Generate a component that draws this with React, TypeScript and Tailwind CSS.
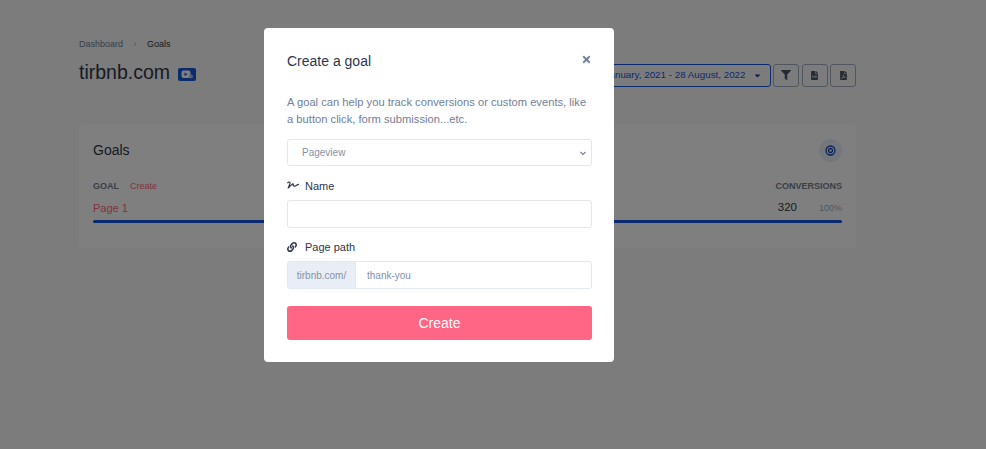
import { FaCaretDown, FaFileCsv, FaFilePdf, FaFilter, FaLink, FaSignature, FaTimes } from "react-icons/fa"

const EXPORT_BUTTONS = [FaFilter, FaFileCsv, FaFilePdf]

function Dashboard() {
  return (
    <main className="h-[449px] overflow-hidden bg-[#f8f8f8] pl-[79px] pr-[130px] pt-[38px] font-['Liberation_Sans',sans-serif] text-[#2d3748]">
      <nav className="flex h-[12px] items-center text-[9px] leading-none">
        <span className="text-[#718096]">Dashboard</span>
        <span className="ml-[10.5px] text-[9px] text-[#a0aec0]">›</span>
        <span className="ml-[10.5px] text-[#2d3748]">Goals</span>
      </nav>

      <div className="mt-[10px] flex h-[26px] items-center">
        <h1 className="text-[19.5px] leading-none text-[#2d3748]">tirbnb.com</h1>
        <span className="ml-[8px] mt-[3px] flex h-[13px] w-[18px] items-center justify-center rounded-[2px] bg-[#1657d8]">
          <svg width="13" height="9" viewBox="0 0 13 9">
            <rect x="0.5" y="0.5" width="9" height="7.5" rx="2" fill="#fff" />
            <path d="M3.5 2.4 6.5 4.2 3.5 6Z" fill="#1657d8" />
            <circle cx="10" cy="6.5" r="2" fill="#a9c5f0" />
          </svg>
        </span>
        <div className="ml-auto mt-[4px] flex items-center gap-[2.5px]">
          <button className="flex h-[23px] w-[200px] items-center justify-end gap-[7px] rounded-[3px] border border-[#1454e0] pr-[8px] text-[9.8px] text-[#1454e0]">
            <span className="whitespace-nowrap">1 January, 2021 - 28 August, 2022</span>
            <FaCaretDown className="size-[9px] text-[#0f3fa8]" />
          </button>
          {EXPORT_BUTTONS.map((Icon, i) => (
            <button
              key={i}
              className="flex h-[23px] w-[26px] items-center justify-center rounded-[3px] border border-[#a0aec0] text-[#4a5568]"
            >
              <Icon className={i === 0 ? "size-[10px]" : "size-[9px]"} />
            </button>
          ))}
        </div>
      </div>

      <section className="mt-[39px] h-[123px] rounded-[4px] bg-white px-[14px] pt-[14px]">
        <div className="flex h-[23px] items-center justify-between">
          <h2 className="text-[14px] text-[#2d3748]">Goals</h2>
          <span className="flex size-[23px] items-center justify-center rounded-full bg-[#e9eef6]">
            <svg width="11" height="11" viewBox="0 0 11 11" fill="none" stroke="#1444b8">
              <circle cx="5.5" cy="5.5" r="4.5" strokeWidth="1.3" />
              <circle cx="5.5" cy="5.5" r="2" strokeWidth="1.3" />
            </svg>
          </span>
        </div>
        <div className="mt-[19px] flex h-[12px] items-center justify-between text-[9px]">
          <div className="flex items-center">
            <span className="font-bold text-[#718096]">GOAL</span>
            <span className="ml-[11px] text-[#ff6584]">Create</span>
          </div>
          <span className="font-bold text-[#718096]">CONVERSIONS</span>
        </div>
        <div className="mt-[8px] flex h-[14px] items-center justify-between">
          <span className="text-[11px] text-[#ff6584]">Page 1</span>
          <div className="flex items-center">
            <span className="text-[11.5px] text-[#2d3748]">320</span>
            <span className="ml-[22px] mt-[2px] text-[9px] text-[#a0aec0]">100%</span>
          </div>
        </div>
        <div className="mt-[5px] h-[3px] rounded-full bg-[#1454e0]" />
      </section>
    </main>
  )
}

function GoalModal() {
  return (
    <div className="fixed inset-0 bg-black/50 font-['Liberation_Sans',sans-serif]">
      <div className="ml-[264px] mt-[28px] h-[334px] w-[350px] rounded-[4px] bg-white pl-[23px] pr-[22px] pt-[23px]">
        <div className="flex h-[20px] items-center justify-between">
          <h2 className="text-[14px] text-[#2d3748]">Create a goal</h2>
          <FaTimes className="mb-[4px] size-[11px] text-[#718096]" />
        </div>
        <p className="mt-[23px] text-[11.2px] leading-[17px] text-[#718096]">
          A goal can help you track conversions or custom events, like a button click, form submission...etc.
        </p>
        <div className="mt-[11px] flex h-[27px] items-center justify-between rounded-[3px] border border-[#e2e8f0] pl-[14px] pr-[4px] text-[10px] text-[#8492a6]">
          <span>Pageview</span>
          <svg width="8" height="8" viewBox="0 0 8 8" fill="none" stroke="#718096" strokeWidth="1.1">
            <path d="M1.5 3 4 5.5 6.5 3" />
          </svg>
        </div>
        <label className="mt-[13px] flex h-[14px] items-center text-[11px] text-[#2d3748]">
          <FaSignature className="mb-[3px] size-[12px] text-[#2d3748]" />
          <span className="ml-[6px]">Name</span>
        </label>
        <div className="mt-[7px] h-[28px] rounded-[3px] border border-[#e2e8f0]" />
        <label className="mt-[12px] flex h-[14px] items-center text-[11px] text-[#2d3748]">
          <FaLink className="mb-[1px] size-[10px] text-[#2d3748]" />
          <span className="ml-[8px]">Page path</span>
        </label>
        <div className="mt-[7px] flex h-[28px] rounded-[3px] border border-[#e2e8f0] text-[10px]">
          <span className="flex w-[68px] items-center justify-center border-r border-[#e2e8f0] bg-[#e9eef6] text-[#8492a6]">
            tirbnb.com/
          </span>
          <span className="ml-[11px] flex items-center text-[#8492a6]">thank-you</span>
        </div>
        <button className="mt-[17px] h-[34px] w-full rounded-[3px] bg-[#ff6584] text-[14px] text-white">
          Create
        </button>
      </div>
    </div>
  )
}

export default function App() {
  return (
    <>
      <Dashboard />
      <GoalModal />
    </>
  )
}
